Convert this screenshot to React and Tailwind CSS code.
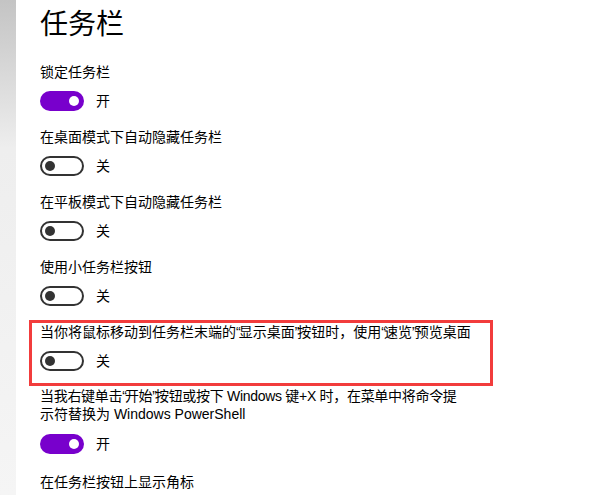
import React from "react";

function Toggle({ on }) {
  return (
    <div className="flex items-center">
      {on ? (
        <div className="w-[44px] h-[20px] rounded-full bg-[#7800cc] flex items-center justify-end pr-[5px]">
          <div className="w-[10px] h-[10px] rounded-full bg-white" />
        </div>
      ) : (
        <div className="w-[44px] h-[20px] rounded-full border-2 border-[#333333] bg-white flex items-center pl-[3px]">
          <div className="w-[10px] h-[10px] rounded-full bg-[#333333]" />
        </div>
      )}
      <span className="ml-[12px] text-[14px] leading-[20px] text-black">{on ? "开" : "关"}</span>
    </div>
  );
}

function Q({ children }) {
  return <span className="tracking-[-2px]">{children}</span>;
}

export default function App() {
  return (
    <div
      className="w-[600px] h-[495px] overflow-hidden flex bg-white text-black"
      style={{ fontFamily: '"Liberation Sans", "Noto Sans CJK SC", sans-serif' }}
    >
      <div className="w-[16px] h-full shrink-0 bg-linear-to-b from-[#c4c4c4] via-[#eeeeee] via-30% to-[#f5f5f5]" />
      <div className="flex-1 pl-[24px] pt-[7px] flex flex-col">
        <div className="text-[28px] leading-[36px]">任务栏</div>

        <div className="mt-[19px] text-[14px] leading-[20px]">锁定任务栏</div>
        <div className="mt-[9px]"><Toggle on /></div>

        <div className="mt-[16px] text-[14px] leading-[20px]">在桌面模式下自动隐藏任务栏</div>
        <div className="mt-[9px]"><Toggle on={false} /></div>

        <div className="mt-[16px] text-[14px] leading-[20px]">在平板模式下自动隐藏任务栏</div>
        <div className="mt-[9px]"><Toggle on={false} /></div>

        <div className="mt-[16px] text-[14px] leading-[20px]">使用小任务栏按钮</div>
        <div className="mt-[9px]"><Toggle on={false} /></div>

        <div className="relative mt-[16px]">
          <div className="text-[14px] leading-[20px] whitespace-nowrap">
            当你将鼠标移动到任务栏末端的<Q>“</Q>显示桌面<Q>”</Q>按钮时，使用<Q>“</Q>速览<Q>”</Q>预览桌面
          </div>
          <div className="mt-[9px]"><Toggle on={false} /></div>
          <div className="absolute left-[-11px] top-[-2px] w-[464px] h-[66px] border-[3px] border-[#f23c3c] pointer-events-none" />
        </div>

        <div className="mt-[16px] text-[14px] leading-[18px] whitespace-nowrap">
          <span className="tracking-[-0.3px]">
            当我右键单击<Q>“</Q>开始<Q>”</Q>按钮或按下 Windows 键+X 时，在菜单中将命令提
          </span>
          <br />
          示符替换为 Windows PowerShell
        </div>
        <div className="mt-[11px]"><Toggle on /></div>

        <div className="mt-[18px] text-[14px] leading-[20px]">在任务栏按钮上显示角标</div>
      </div>
    </div>
  );
}
